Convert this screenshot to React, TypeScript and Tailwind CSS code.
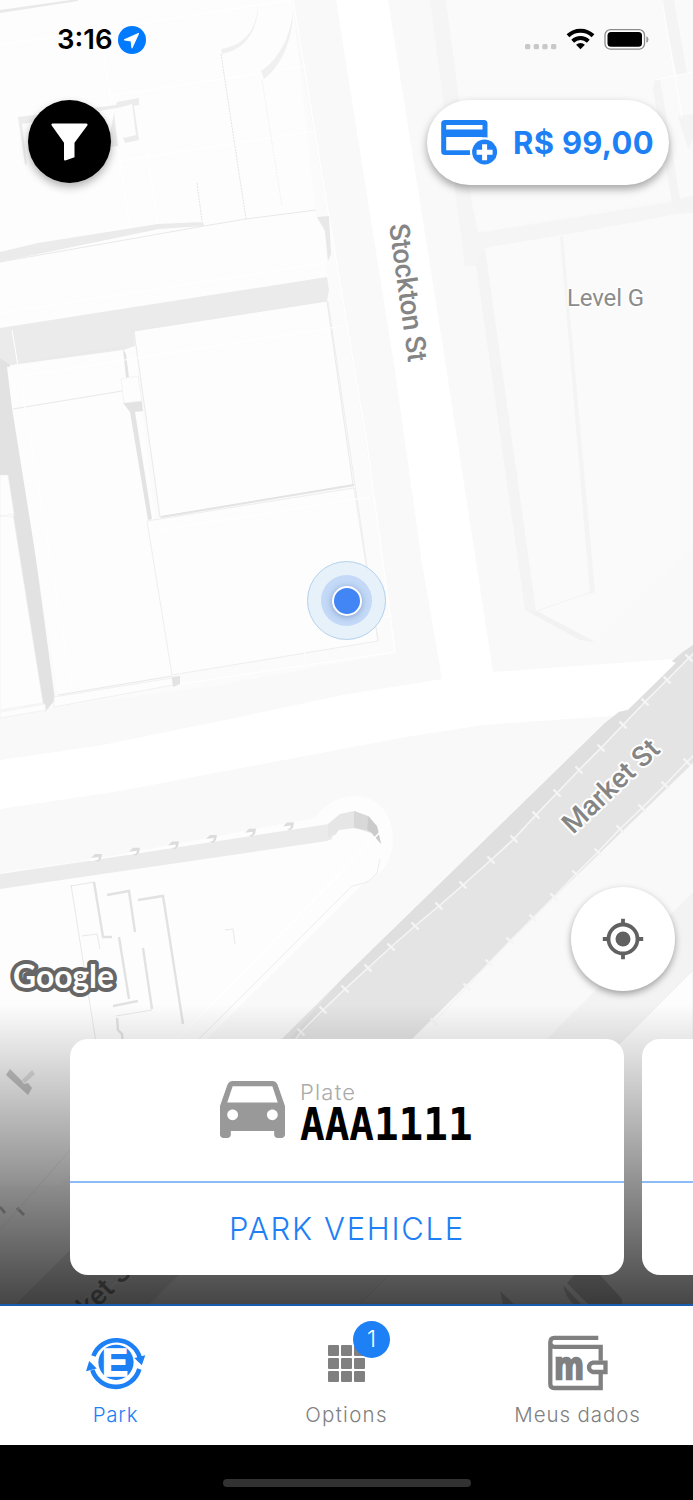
const trackA = [
  [711, 636], [689, 658], [667, 680], [645, 702], [623, 725], [601, 748], [579, 770], [557, 793],
  [536, 815], [514, 839], [491, 860], [463, 885], [439, 906], [415, 926], [391, 947], [368, 968],
  [345, 989], [323, 1010], [301, 1032], [120, 1278], [95, 1302],
];

const trackB = [
  [709, 740], [687, 762], [665, 785], [642, 808], [620, 829], [598, 852], [576, 874], [554, 897],
  [533, 918], [510, 941], [489, 963], [467, 987], [434, 1022],
];

const ledges = [96, 134, 173, 211, 250, 288];

function Track({ points }: { points: number[][] }) {
  return (
    <g stroke="#f5f5f5" fill="none">
      <polyline points={points.map((p) => p.join(",")).join(" ")} strokeWidth="1.6" />
      {points.map(([x, y]) => (
        <path key={x} d={`M${x - 3.5} ${y - 3.5}l7 7`} strokeWidth="2.4" />
      ))}
    </g>
  );
}

function MapCanvas() {
  return (
    <svg className="absolute inset-0" width="693" height="1304" viewBox="0 0 693 1304" aria-hidden="true">
      <rect width="693" height="1304" fill="#f9f9f9" />

      {/* Right-hand blocks */}
      <path d="M430 0h16l13 100 12 100 7 32 8 1 7 12-10 21h-18z" fill="#f5f5f5" />
      <path d="M478 233l193-31 22-7v18l-17 1-118 23-73 11z" fill="#f5f5f5" />
      <path d="M446 0h247v195l-215 37z" fill="#fafafa" />
      <path d="M661 0h13l13 74-10 2zM655 80l-2 8 19 116 11 8 10-3v-8l-13-2-20-121zM678 116l15-2v25l-5 10z" fill="#f4f4f4" />
      <path d="M662 0l20 118M655 80l38-8" stroke="#fff" fill="none" />
      <path d="M484 248l212-36v330L595 640 536 611z" fill="#fafafa" />
      <path d="M476 265l9-17 51 363-11-1zM560 237l3-1 32 356-5 2z" fill="#f4f4f4" />
      <path d="M525 610l12 1 58 31-15-2z" fill="#f2f2f2" />
      <path d="M537 611l57-20" stroke="#f3f3f3" fill="none" />

      {/* Stockton St and its crossing */}
      <path d="M336 0h52l57 360 20 130 28 182 180-13 20-2v55l-68 3-142 10-83 13-280 53-120 18V760l103-15 122-25 118-25 99-16-20-116-27-192z" fill="#fff" />

      {/* North-west blocks */}
      <path d="M0 0h289l40 217 7 45 37 231 23 160-175 32-166 22L0 716z" fill="#fbfbfb" />
      <path d="M0 0h292l24 215L0 260z" fill="#fdfdfd" />
      <path d="M0 10l78-11v2L0 13z" fill="#e9e9e9" />
      <path d="M0 45L290 0M110 96l196-30M120 161l195-30M103 50l27 178M146 150l12 74M293 0l36 217 38 227 28 208-215 32" stroke="#fff" strokeWidth="1.2" fill="none" />
      <path d="M258 0c0 20-6 44-37 49l1 5c30-6 37-32 36-54zM293 12c-3 26-15 48-32 59l3 8c17-12 29-40 29-67z" fill="#f0f0f0" />
      <path d="M221 54l25 165M197 183l5 38" stroke="#e4e4e4" strokeDasharray="2 1" fill="none" />
      <path d="M262 80l20 126" stroke="#f3f3f3" strokeDasharray="2 1" fill="none" />
      <path d="M18 117l98-12 1-3 22-4v7l-22 3-95 16 5 40-2 1zM134 106l5 34-14 3-2-6 12-2-3-29zM114 112l4 34-10 1M44 175l2 14" fill="#ececec" />
      <path d="M118 108l14-4 4 31-12 3z" fill="#fdfdfd" />
      <path d="M0 252l38-9 120-19 45-2 1 4-45 3L0 262z" fill="#ebebeb" />
      <path d="M0 262l204-36 42-7 70-9 1 9 7 12 2 23 1 23L0 328z" fill="#fdfdfd" />
      <path d="M0 262l204-36 42-7 70-9" stroke="#e9e9e9" fill="none" />
      <path d="M317 217l12-1 2 38-3 7-3-30z" fill="#e8e8e8" />
      <path d="M0 313l326-50" stroke="#fff" fill="none" />
      <path d="M0 328l327-51 2 13-2 11-193 30 1 15-11 4-114 15-7 9-5-8z" fill="#ebebeb" />
      <path d="M0 358l10 7 45 335-10 12L0 480z" fill="#e2e2e2" />
      <path d="M0 475h8l6 38v4L0 516zM0 516l13-2 30 189-43 7zM0 712l45-8 1 6-46 8z" fill="#fdfdfd" stroke="#ececec" strokeWidth=".6" />
      <path d="M7 367l117-17 11-4 19 168 18 162-114 20-46-288z" fill="#fdfdfd" />
      <path d="M13 409l109-18M58 695l114-19M12 364l111-17" stroke="#e9e9e9" fill="none" />
      <path d="M54 697l118-19 1 7-119 22z" fill="#fdfdfd" stroke="#ededed" strokeWidth=".8" />
      <path d="M172 677l8-1v8l-7 3zM123 349l3 5 3 23-3 1zM123 403l7 9 18 108 4-1-17-107 8-1-1-10z" fill="#e3e3e3" />
      <path d="M121 379l17-3 4 25-18 2z" fill="#fdfdfd" stroke="#eee" strokeWidth=".7" />
      <path d="M134 331l193-30 26 184-193 32z" fill="#fdfdfd" stroke="#e8e8e8" strokeWidth=".9" />
      <path d="M161 517l193-32" stroke="#e4e4e4" strokeWidth="2" />
      <path d="M147 521l207-33 24 153-206 34z" fill="#fdfdfd" stroke="#ececec" strokeWidth=".9" />
      <path d="M328 302l50 339" stroke="#ededed" />
      <path d="M22 376l321-50M160 530l210-33M302 630l90-14M301 630l5 34M160 530l20 145M12 330l60 360" stroke="#fff" fill="none" />

      {/* Flatiron block south of the crossing */}
      <path d="M0 873l95-14 220-41c12-18 30-22 40-22 24 0 38 20 38 43 0 20-10 35-26 41L60 1185H0z" fill="#fdfdfd" />
      <path d="M0 874l95-14 234-36 5-2-2 17-5 2L0 889z" fill="#ebebeb" />
      <path d="M328 824l12-10 14-3 16 6 8 12 3 15-10-11-16-5-16 2-4 5-7 2z" fill="#e6e6e6" />
      <path d="M354 811l14 5-1 14-13-2z" fill="#d8d8d8" />
      <path d="M368 816l9 10 4 18-9-11-5-3z" fill="#cbcbcb" />
      {ledges.map((x, i) => (
        <g key={x}>
          <path d={`M${x - 5} ${858 - i * 6.3}l4 -4h7l-1 5 -3 3z`} fill="#dcdcdc" />
          <path d={`M${x - 5} ${858 - i * 6.3}l8 -1 -1 3 -8 1z`} fill="#fff" />
        </g>
      ))}
      <path d="M380 859l-3 14-9 9-16 4-210 210" stroke="#ededed" fill="none" />
      <path d="M388 824L60 1160" stroke="#fff" strokeWidth="1.5" />
      <g fill="none" stroke="#e2e2e2" strokeWidth="2.4">
        <path d="M94 882l9 55h9M107 895l22-4 6 41M138 900l25-4 20 128M119 937l10 62M113 1006l25-5M143 948l9 61M117 1018l1 12 4 4 2 20" />
        <path d="M71 886l23-4M71 885l27 170M82 936l15-2 3 15M116 1016l36-6M225 930l8-1 2 15" strokeWidth=".8" />
      </g>
      <path d="M6 1075l4-6 12 12 2 3 4-1 4 5-4 7z" fill="#c9c9c9" />
      <path d="M22 1080l10-10 3 4-10 9z" fill="#e3e3e3" />
      <path d="M0 1207l5 6M17 1208l7 7" stroke="#bdbdbd" strokeWidth="3" />
      <path d="M0 1230l70-80" stroke="#ececec" />

      {/* South-east blocks */}
      <path d="M693 892v82L500 1167h-80z" fill="#f3f3f3" />
      <path d="M693 970v334H360z" fill="#fdfdfd" stroke="#ececec" />
      <path d="M567 1283l8-9h24l23 25v5h-34zM563 1285l18 19h-8q-8-8-10-19zM500 1291l14 13h-11z" fill="#cfcfcf" />

      {/* Market St */}
      <path d="M693 645l-10 7-11 9 4 2-48 47-9 2-14 11L343 978 16 1304h134L413 1038l155-154 125-121z" fill="#e4e4e4" />
      <path d="M693 645l-10 7-11 9 4 2-48 47-9 2-14 11L343 978l-53 60h8l47-49 146-129 202-208z" fill="#dfdfdf" />
      <Track points={trackA} />
      <Track points={trackB} />

      <g fontFamily="Roboto, sans-serif" fill="#858585" stroke="#fff" strokeWidth="4" strokeLinejoin="round" paintOrder="stroke">
        <text transform="translate(389 225) rotate(82)" fontSize="28" fontWeight="500" textLength="139">Stockton St</text>
        <text transform="translate(573 835) rotate(-43.5)" fontSize="28" fontWeight="500" textLength="122">Market St</text>
        <text transform="translate(53 1353) rotate(-45)" fontSize="28" fontWeight="500" textLength="122" stroke="#e8e8e8">Market St</text>
        <text x="567" y="306" fontSize="24" textLength="77" strokeWidth="3" fill="#8c8c8c">Level G</text>
      </g>
      <text x="13" y="988" fontFamily="Lato, sans-serif" fontSize="33" fontWeight="700" textLength="101" lengthAdjust="spacingAndGlyphs" fill="#fff" stroke="#666" strokeWidth="8" strokeLinejoin="round" paintOrder="stroke">Google</text>
    </svg>
  );
}

function LocationDot() {
  return (
    <div className="absolute left-[307px] top-[561px] flex size-[79px] items-center justify-center rounded-full border border-[#b3d1ee] bg-[#e5f0f9]/95">
      <div className="flex size-[51px] items-center justify-center rounded-full bg-[#c3d9f7]">
        <div className="size-[30px] rounded-full border-[2.5px] border-white bg-[#4285f4] shadow-[0_1px_6px_rgba(60,90,150,0.45)]" />
      </div>
    </div>
  );
}

function StatusBar() {
  return (
    <div className="relative flex h-20 items-center justify-between pr-[44px] pl-[57px]">
      <div className="flex items-center gap-[6px]">
        <span className="w-[55px] text-[27.5px] font-semibold whitespace-nowrap">3:16</span>
        <svg width="28" height="28" viewBox="0 0 28 28">
          <circle cx="14" cy="14" r="14" fill="#007aff" />
          <path d="M20.5 7.5L6.5 13.8l6.7 1.2.8 6.8z" fill="#fff" stroke="#fff" strokeWidth="1.2" strokeLinejoin="round" />
        </svg>
      </div>
      <svg width="124" height="24" viewBox="525 28 124 24">
        <g fill="#c8c8c8">
          <rect x="525" y="44" width="5.3" height="5.3" rx="1.5" />
          <rect x="533.7" y="44" width="5.3" height="5.3" rx="1.5" />
          <rect x="542.3" y="44" width="5.3" height="5.3" rx="1.5" />
          <rect x="551" y="44" width="5.3" height="5.3" rx="1.5" />
        </g>
        <path d="M568 35.8a18 18 0 0 1 25 0M572.7 41.2a11.3 11.3 0 0 1 15.6 0" fill="none" stroke="#000" strokeWidth="4" />
        <path d="M580.5 49.3l-4.4-4.5a6.3 6.3 0 0 1 8.8 0z" />
        <rect x="605" y="29.7" width="39.5" height="19.5" rx="5.5" fill="#fff" stroke="#8a8a8a" strokeWidth="1.3" />
        <rect x="607.5" y="32" width="34.5" height="14.8" rx="3.5" />
        <path d="M646.3 36.3q2.2.7 2.2 3.2t-2.2 3.2z" fill="#999" />
      </svg>
    </div>
  );
}

function TopActions() {
  return (
    <div className="relative mt-5 flex items-start justify-between pr-6 pl-7">
      <button className="flex size-[83px] items-center justify-center rounded-full bg-black shadow-[0_4px_9px_rgba(0,0,0,0.3)]">
        <svg width="37" height="38" viewBox="0 0 37 38">
          <path d="M1.4.5h34.2q1.5.6.7 2L23.5 19.8v14.4L14.3 37.4q-1.3.2-1.3-1V19.8L.7 2.5q-.8-1.4.7-2z" fill="#fff" />
        </svg>
      </button>
      <button className="flex h-[85px] w-[242px] items-start rounded-full bg-white pl-[14px] text-[#1e80f5] shadow-[0_4px_9px_rgba(0,0,0,0.35)]">
        <svg className="mt-5 shrink-0" width="56" height="46" viewBox="441 120 56 46" fill="currentColor">
          <path fillRule="evenodd" d="M445 120h39q3.5 0 3.5 3.5v28q0 3.5-3.5 3.5h-39q-3.8 0-3.8-3.5v-28q0-3.5 3.8-3.5zm1.2 5v4.5h36.3V125zm0 12v13.3h36.3V137z" />
          <circle cx="484.6" cy="152" r="14.7" fill="#fff" />
          <circle cx="484.6" cy="152" r="12.5" />
          <path d="M476.6 152.2h16M484.6 144.2v16" stroke="#fff" strokeWidth="5" />
        </svg>
        <span className="mt-[23px] ml-4 text-[31px] leading-10 font-bold tracking-[0.3px] whitespace-nowrap">R$ 99,00</span>
      </button>
    </div>
  );
}

function VehicleCard() {
  return (
    <section className="flex h-[236px] w-[554px] shrink-0 flex-col overflow-hidden rounded-[18px] bg-white">
      <div className="flex h-[144px] items-center justify-center gap-[15px] border-b-2 border-[#8bbcf7]">
        <svg className="-mt-[2px]" width="65" height="57" viewBox="3 5 18 16" preserveAspectRatio="none" fill="#999">
          <path d="M18.92 6.01C18.72 5.42 18.16 5 17.5 5h-11c-.66 0-1.21.42-1.42 1.01L3 12v8c0 .55.45 1 1 1h1c.55 0 1-.45 1-1v-1h12v1c0 .55.45 1 1 1h1c.55 0 1-.45 1-1v-8l-2.08-5.99zM6.5 16c-.83 0-1.5-.67-1.5-1.5S5.67 13 6.5 13s1.5.67 1.5 1.5S7.33 16 6.5 16zm11 0c-.83 0-1.5-.67-1.5-1.5s.67-1.5 1.5-1.5 1.5.67 1.5 1.5-.67 1.5-1.5 1.5zM5 11l1.5-4.5h11L19 11H5z" />
        </svg>
        <div className="w-[174px] pt-[5px]">
          <p className="text-[22px] leading-6 font-light tracking-[1.2px] text-[#aaa]">Plate</p>
          <p className="origin-left scale-x-[0.91] font-['DejaVu_Sans_Mono',monospace] text-[45px] leading-[42px] font-bold whitespace-nowrap">AAA1111</p>
        </div>
      </div>
      <button className="flex flex-1 items-center justify-center text-[31px] font-light tracking-[1.7px] whitespace-nowrap text-[#1e80f5]">
        PARK VEHICLE
      </button>
    </section>
  );
}

/* Edge of the following card in the carousel */
function NextCardPeek() {
  return (
    <div className="h-[236px] flex-1 overflow-hidden rounded-l-[18px] bg-white">
      <div className="h-[144px] border-b-2 border-[#8bbcf7]" />
    </div>
  );
}

function ParkIcon() {
  return (
    <svg width="60" height="56" viewBox="86 1335.5 60 56" fill="#1e80f5">
      <path d="M93.4 1356.5a24.6 24.6 0 0 1 46.6 2M139.3 1369.5a24.6 24.6 0 0 1-47 1" fill="none" stroke="#1e80f5" strokeWidth="4.6" />
      <path d="M134.3 1358.5l11-2.7-3.5 10zM86 1371.7l3.2-10.3 7.5 7.6z" />
      <circle cx="116" cy="1362.8" r="17.6" />
      <text x="102" y="1376.5" fontFamily="Liberation Sans, sans-serif" fontSize="39" fontWeight="700" fill="#fff" stroke="#fff" strokeWidth="1.5">E</text>
    </svg>
  );
}

function GridIcon() {
  return (
    <div className="relative">
      <div className="grid grid-cols-3 gap-[2px]">
        {Array.from({ length: 9 }, (_, i) => (
          <div key={i} className="size-[11px] rounded-[1px] bg-[#808080]" />
        ))}
      </div>
      <span className="absolute -top-[24px] left-[25px] flex size-[37px] items-center justify-center rounded-full bg-[#1e80f5] text-[23px] font-light text-white">
        1
      </span>
    </div>
  );
}

function WalletIcon() {
  return (
    <svg width="60" height="56" viewBox="547.5 1335.5 60 56" fill="none" stroke="#808080" strokeWidth="4.3">
      <path d="M597.8 1338.3h-44q-4 0-4 4.5 0 4.5 4 4.5h46.4v14M600.2 1374v14.5h-46.4q-4 0-4-4V1342.5" />
      <path d="M605 1363.2h-12.5a4.7 4.7 0 0 0 0 9.3H605z" />
      <text x="554" y="1379" fontFamily="Liberation Sans, sans-serif" fontSize="39" fontWeight="700" textLength="29" lengthAdjust="spacingAndGlyphs" fill="#808080" strokeWidth="2.6">m</text>
    </svg>
  );
}

const tabs = [
  { label: "Park", icon: <ParkIcon />, style: "text-[#1e80f5] tracking-[0.8px]" },
  { label: "Options", icon: <GridIcon />, style: "text-[#808080] tracking-[1.3px]" },
  { label: "Meus dados", icon: <WalletIcon />, style: "text-[#808080] tracking-[0.9px]" },
];

export default function App() {
  return (
    <div className="flex h-[1500px] w-[693px] flex-col overflow-hidden bg-black font-['Inter',sans-serif] text-black">
      <main className="relative flex h-[1304px] flex-col overflow-hidden">
        <MapCanvas />
        <LocationDot />
        <StatusBar />
        <TopActions />

        <div className="relative mt-auto">
          <div className="flex justify-end pr-[18px]">
            <button className="flex size-[104px] items-center justify-center rounded-full bg-white shadow-[0_3px_7px_rgba(0,0,0,0.35)]">
              <svg width="42" height="42" viewBox="0 0 42 42" fill="none" stroke="#616161">
                <circle cx="21" cy="21" r="14.5" strokeWidth="3.8" />
                <circle cx="21" cy="21" r="7.5" fill="#616161" stroke="none" />
                <path d="M21 .8v5M21 36.2v5M.8 21h5M36.2 21h5" strokeWidth="3.8" />
              </svg>
            </button>
          </div>
          <div className="mt-[13px] h-[300px] bg-linear-to-b from-black/0 to-black/72 pt-[35px]">
            <div className="flex gap-[18px] pl-[70px]">
              <VehicleCard />
              <NextCardPeek />
            </div>
          </div>
        </div>
      </main>

      <nav className="grid h-[141px] grid-cols-3 border-t-2 border-[#1a5cad] bg-white">
        {tabs.map(({ label, icon, style }) => (
          <a key={label} className="flex flex-col items-center pt-[29px]">
            <div className="flex h-14 items-center justify-center">{icon}</div>
            <span className={`mt-[10px] text-[20.5px] leading-7 font-light whitespace-nowrap ${style}`}>{label}</span>
          </a>
        ))}
      </nav>

      <div className="flex h-[55px] justify-center pt-[34px]">
        <div className="h-2 w-[248px] rounded-full bg-[#323232]" />
      </div>
    </div>
  );
}
